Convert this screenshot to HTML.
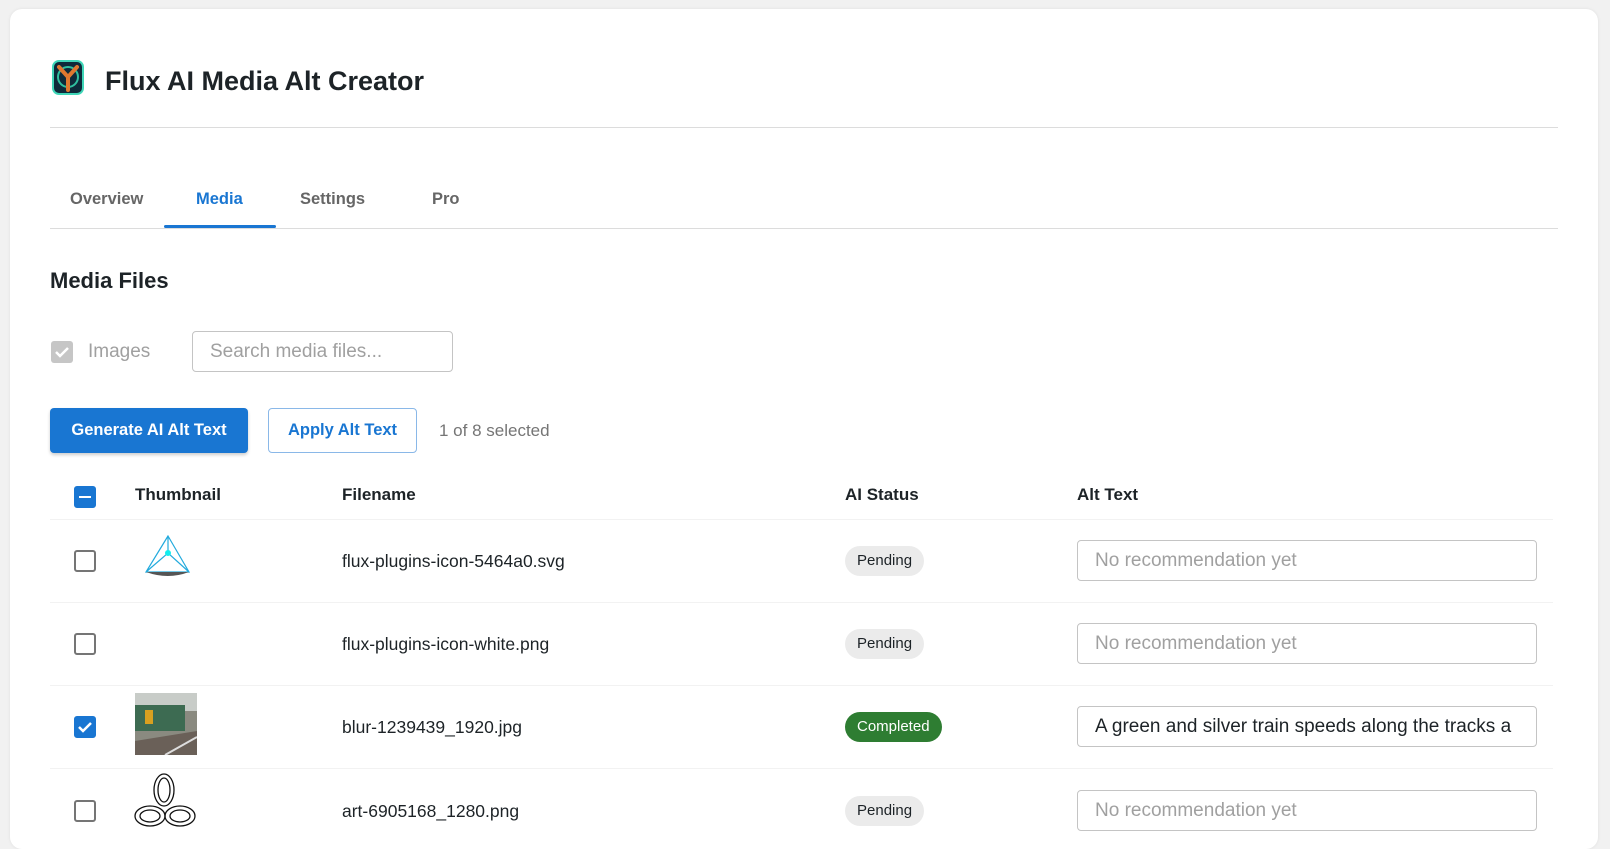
<!DOCTYPE html>
<html><head><meta charset="utf-8"><style>
*{box-sizing:border-box;margin:0;padding:0}
body{width:1610px;height:835px;background:#f1f1f1;font-family:"Liberation Sans",sans-serif;color:#1d2327;overflow:hidden;position:relative}
.card{position:absolute;left:10px;top:9px;width:1588px;height:840px;background:#fff;border-radius:12px;box-shadow:0 0 3px rgba(0,0,0,.08)}
.a{position:absolute;white-space:nowrap}
.cb{position:absolute;width:22px;height:22px;border:2px solid #757575;border-radius:3px;background:#fff}
.cb.on{background:#1976d2;border-color:#1976d2}
.badge{position:absolute;height:30px;line-height:30px;border-radius:15px;padding:0 12px;font-size:15px;background:#ebebeb;color:#1d2327}
.inp{position:absolute;left:1077px;width:460px;height:41px;border:1px solid #c4c4c4;border-radius:4px;font-size:19px;color:#a0a0a0;padding-left:17px;line-height:39px;overflow:hidden;white-space:nowrap}
.fn{position:absolute;left:342px;font-size:17.5px}
.hr{position:absolute;left:50px;width:1503px;height:1px;background:#f2f2f2}
.tab{position:absolute;top:190px;font-size:16.5px;font-weight:bold;color:#666}
</style></head><body>
<div class="card"></div>
<svg class="a" style="left:52px;top:60px" width="32" height="35" viewBox="0 0 32 35">
<rect x="1" y="1" width="30" height="33" rx="6" fill="#0e2a3a" stroke="#3fd6b8" stroke-width="2"/>
<circle cx="16" cy="17" r="10" fill="none" stroke="#2fbf9f" stroke-width="2"/>
<path d="M7 7 L16 17 L25 7 M16 17 V30" stroke="#e0782f" stroke-width="4" fill="none" stroke-linecap="round"/>
</svg>
<div class="a" style="left:105px;top:66px;font-size:27px;font-weight:bold;color:#1d2327">Flux AI Media Alt Creator</div>
<div class="a" style="left:50px;top:127px;width:1508px;height:1px;background:#dcdcdc"></div>
<div class="tab" style="left:70px">Overview</div>
<div class="tab" style="left:196px;color:#1976d2">Media</div>
<div class="tab" style="left:300px">Settings</div>
<div class="tab" style="left:432px">Pro</div>
<div class="a" style="left:50px;top:228px;width:1508px;height:1px;background:#dcdcdc"></div>
<div class="a" style="left:164px;top:225px;width:112px;height:3px;background:#1976d2;border-radius:2px"></div>
<div class="a" style="left:50px;top:268px;font-size:22px;font-weight:bold;color:#1d2327">Media Files</div>
<div class="a" style="left:51px;top:341px;width:22px;height:22px;background:#c6c6c6;border-radius:3px"></div>
<svg class="a" style="left:51px;top:341px" width="22" height="22"><path d="M5 11 l4 4 l8 -8" stroke="#fff" stroke-width="2.5" fill="none"/></svg>
<div class="a" style="left:88px;top:341px;font-size:19px;color:#a0a0a0">Images</div>
<div class="a" style="left:192px;top:331px;width:261px;height:41px;border:1px solid #c4c4c4;border-radius:4px;font-size:19px;color:#a0a0a0;padding-left:17px;line-height:39px">Search media files...</div>
<div class="a" style="left:50px;top:408px;width:198px;height:45px;background:#1976d2;border-radius:4px;color:#fff;font-size:16.5px;font-weight:bold;text-align:center;line-height:45px;box-shadow:0 2px 3px rgba(0,0,0,.2)">Generate AI Alt Text</div>
<div class="a" style="left:268px;top:408px;width:149px;height:45px;border:1px solid #8ab8e8;border-radius:4px;color:#1976d2;font-size:16.5px;font-weight:bold;text-align:center;line-height:43px">Apply Alt Text</div>
<div class="a" style="left:439px;top:421px;font-size:17px;color:#757575">1 of 8 selected</div>
<div class="cb on" style="left:74px;top:486px"></div>
<div class="a" style="left:79px;top:496px;width:12px;height:2px;background:#fff"></div>
<div class="a" style="left:135px;top:485px;font-size:17px;font-weight:bold;color:#1d2327">Thumbnail</div>
<div class="a" style="left:342px;top:485px;font-size:17px;font-weight:bold">Filename</div>
<div class="a" style="left:845px;top:485px;font-size:17px;font-weight:bold">AI Status</div>
<div class="a" style="left:1077px;top:485px;font-size:17px;font-weight:bold">Alt Text</div>
<div class="hr" style="top:519px"></div><div class="hr" style="top:602px"></div><div class="hr" style="top:685px"></div><div class="hr" style="top:768px"></div>
<div class="cb" style="left:74px;top:550px"></div>
<svg class="a" style="left:143px;top:534px" width="48" height="48"><path d="M25 2 L3 38 L46 38 Z M25 2 L25 19 M3 38 L25 19 L46 38" stroke="#2ad" stroke-width="1.2" fill="none"/><circle cx="25" cy="19" r="3" fill="#1ee"/><path d="M3 38 Q25 46 46 38 Z" fill="#555"/></svg>
<div class="fn" style="top:551px">flux-plugins-icon-5464a0.svg</div>
<div class="badge" style="left:845px;top:546px">Pending</div>
<div class="inp" style="top:540px">No recommendation yet</div>
<div class="cb" style="left:74px;top:633px"></div>
<div class="fn" style="top:634px">flux-plugins-icon-white.png</div>
<div class="badge" style="left:845px;top:629px">Pending</div>
<div class="inp" style="top:623px">No recommendation yet</div>
<div class="cb on" style="left:74px;top:716px"></div>
<svg class="a" style="left:74px;top:716px" width="22" height="22"><path d="M5 11 l4 4 l8 -8" stroke="#fff" stroke-width="2.5" fill="none"/></svg>
<svg class="a" style="left:135px;top:693px" width="62" height="62"><rect width="62" height="62" fill="#8a8a80"/><rect width="62" height="18" fill="#c8ccc8"/><rect x="0" y="12" width="50" height="26" fill="#3d6b52"/><rect x="10" y="17" width="8" height="14" fill="#d9a020"/><path d="M0 48 L62 38 L62 62 L0 62Z" fill="#6a6058"/><path d="M30 62 L62 44" stroke="#ddd" stroke-width="2"/></svg>
<div class="fn" style="top:717px">blur-1239439_1920.jpg</div>
<div class="badge" style="left:845px;top:712px;background:#2e7d32;color:#fff">Completed</div>
<div class="inp" style="top:706px;color:#1d2327">A green and silver train speeds along the tracks a</div>
<div class="cb" style="left:74px;top:800px"></div>
<svg class="a" style="left:134px;top:772px" width="64" height="63"><g fill="none" stroke="#111" stroke-width="1.3"><ellipse cx="30" cy="18" rx="10" ry="16"/><ellipse cx="30" cy="18" rx="6" ry="12"/><ellipse cx="16" cy="44" rx="15" ry="10"/><ellipse cx="16" cy="44" rx="10" ry="6"/><ellipse cx="46" cy="44" rx="15" ry="10"/><ellipse cx="46" cy="44" rx="10" ry="6"/></g></svg>
<div class="fn" style="top:801px">art-6905168_1280.png</div>
<div class="badge" style="left:845px;top:796px">Pending</div>
<div class="inp" style="top:790px">No recommendation yet</div>
</body></html>
